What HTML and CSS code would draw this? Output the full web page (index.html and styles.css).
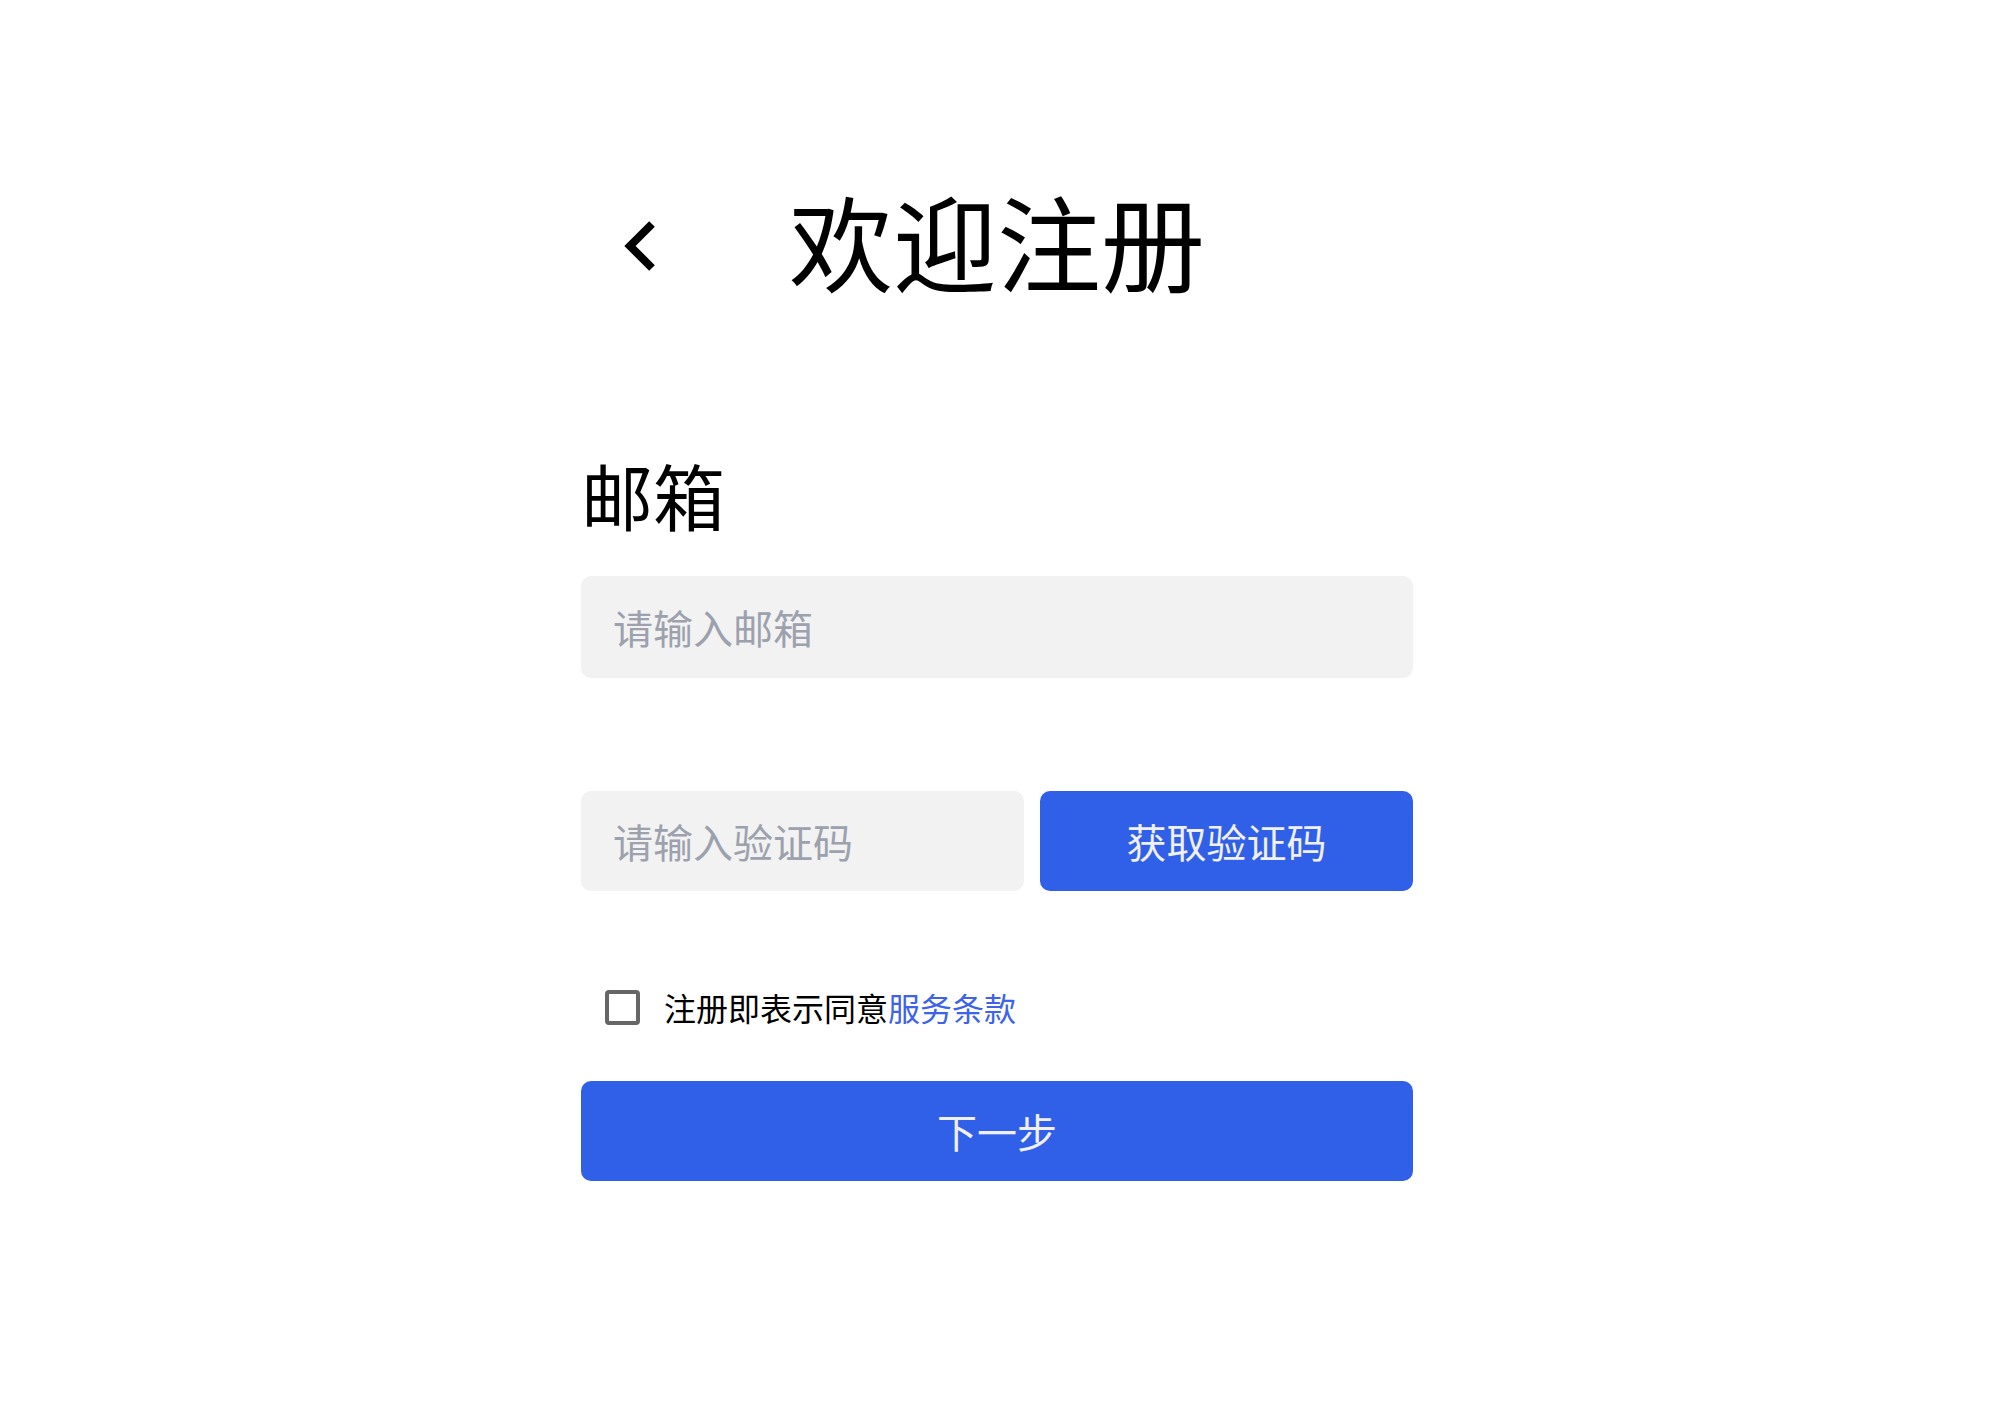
FILE: index.html
```html
<!DOCTYPE html>
<html lang="zh-CN">
<head>
<meta charset="utf-8">
<title>欢迎注册</title>
<link rel="stylesheet" href="styles.css">
</head>
<body>
<div class="page">
  <div class="form">
    <div class="header">
      <a class="back" href="#" aria-label="返回">
        <svg width="40" height="56" viewBox="0 0 40 56">
          <path d="M31 6 L9 28 L31 50" fill="none" stroke="#000" stroke-width="8" stroke-linejoin="miter"/>
        </svg>
      </a>
      <h1 class="title">欢迎注册</h1>
      <div class="spacer"></div>
    </div>

    <div class="label">邮箱</div>
    <input class="field" type="text" placeholder="请输入邮箱">

    <div class="code-row">
      <input class="field code" type="text" placeholder="请输入验证码">
      <button class="btn get-code" type="button">获取验证码</button>
    </div>

    <label class="agree">
      <span class="check"></span>
      <span class="agree-text">注册即表示同意<a class="link" href="#">服务条款</a></span>
    </label>

    <button class="btn next" type="button">下一步</button>
  </div>
</div>
</body>
</html>
```

FILE: styles.css
```css
* {
  box-sizing: border-box;
}

html, body {
  margin: 0;
  padding: 0;
  background: #ffffff;
}

body {
  font-family: "Noto Sans CJK SC", "Noto Sans", sans-serif;
  color: #000;
}

.page {
  display: flex;
  justify-content: center;
  padding: 170px 10px 0 0;
}

.form {
  width: 832px;
  display: flex;
  flex-direction: column;
}

.header {
  display: grid;
  grid-template-columns: 1fr auto 1fr;
  align-items: center;
  height: 140px;
}

.back {
  display: block;
  width: 40px;
  height: 56px;
  margin-left: 40px;
  margin-top: 12px;
}

.back svg {
  display: block;
}

.title {
  margin: 0;
  font-size: 104px;
  line-height: 140px;
  font-weight: 400;
  letter-spacing: 0;
}

.label {
  margin-top: 144px;
  font-size: 72px;
  line-height: 80px;
  height: 80px;
}

.field {
  display: block;
  width: 100%;
  height: 102px;
  margin-top: 42px;
  border: none;
  outline: none;
  border-radius: 10px;
  background: #f2f2f2;
  padding: 0 0 0 32px;
  font-family: "Noto Sans CJK SC", "Noto Sans", sans-serif;
  font-size: 40px;
  color: #222;
}

.field::placeholder {
  color: #9ca1ad;
}

.code-row {
  display: flex;
  gap: 16px;
  margin-top: 113px;
  height: 100px;
}

.code-row .field {
  flex: 1;
  margin-top: 0;
  height: 100px;
}

.btn {
  border: none;
  border-radius: 10px;
  background: #3160e8;
  color: #f0f0f0;
  font-family: "Noto Sans CJK SC", "Noto Sans", sans-serif;
  font-size: 40px;
  cursor: pointer;
  padding: 0;
}

.get-code {
  width: 373px;
  height: 100px;
}

.agree {
  display: flex;
  align-items: center;
  height: 50px;
  margin-top: 91px;
  padding-left: 24px;
  cursor: pointer;
}

.check {
  width: 35px;
  height: 35px;
  border: 4px solid #666666;
  border-radius: 4px;
  flex: none;
}

.agree-text {
  margin-left: 24px;
  font-size: 32px;
  line-height: 50px;
  color: #000;
}

.link {
  color: #3d63ea;
  text-decoration: none;
}

.next {
  width: 100%;
  height: 100px;
  margin-top: 49px;
}
```
